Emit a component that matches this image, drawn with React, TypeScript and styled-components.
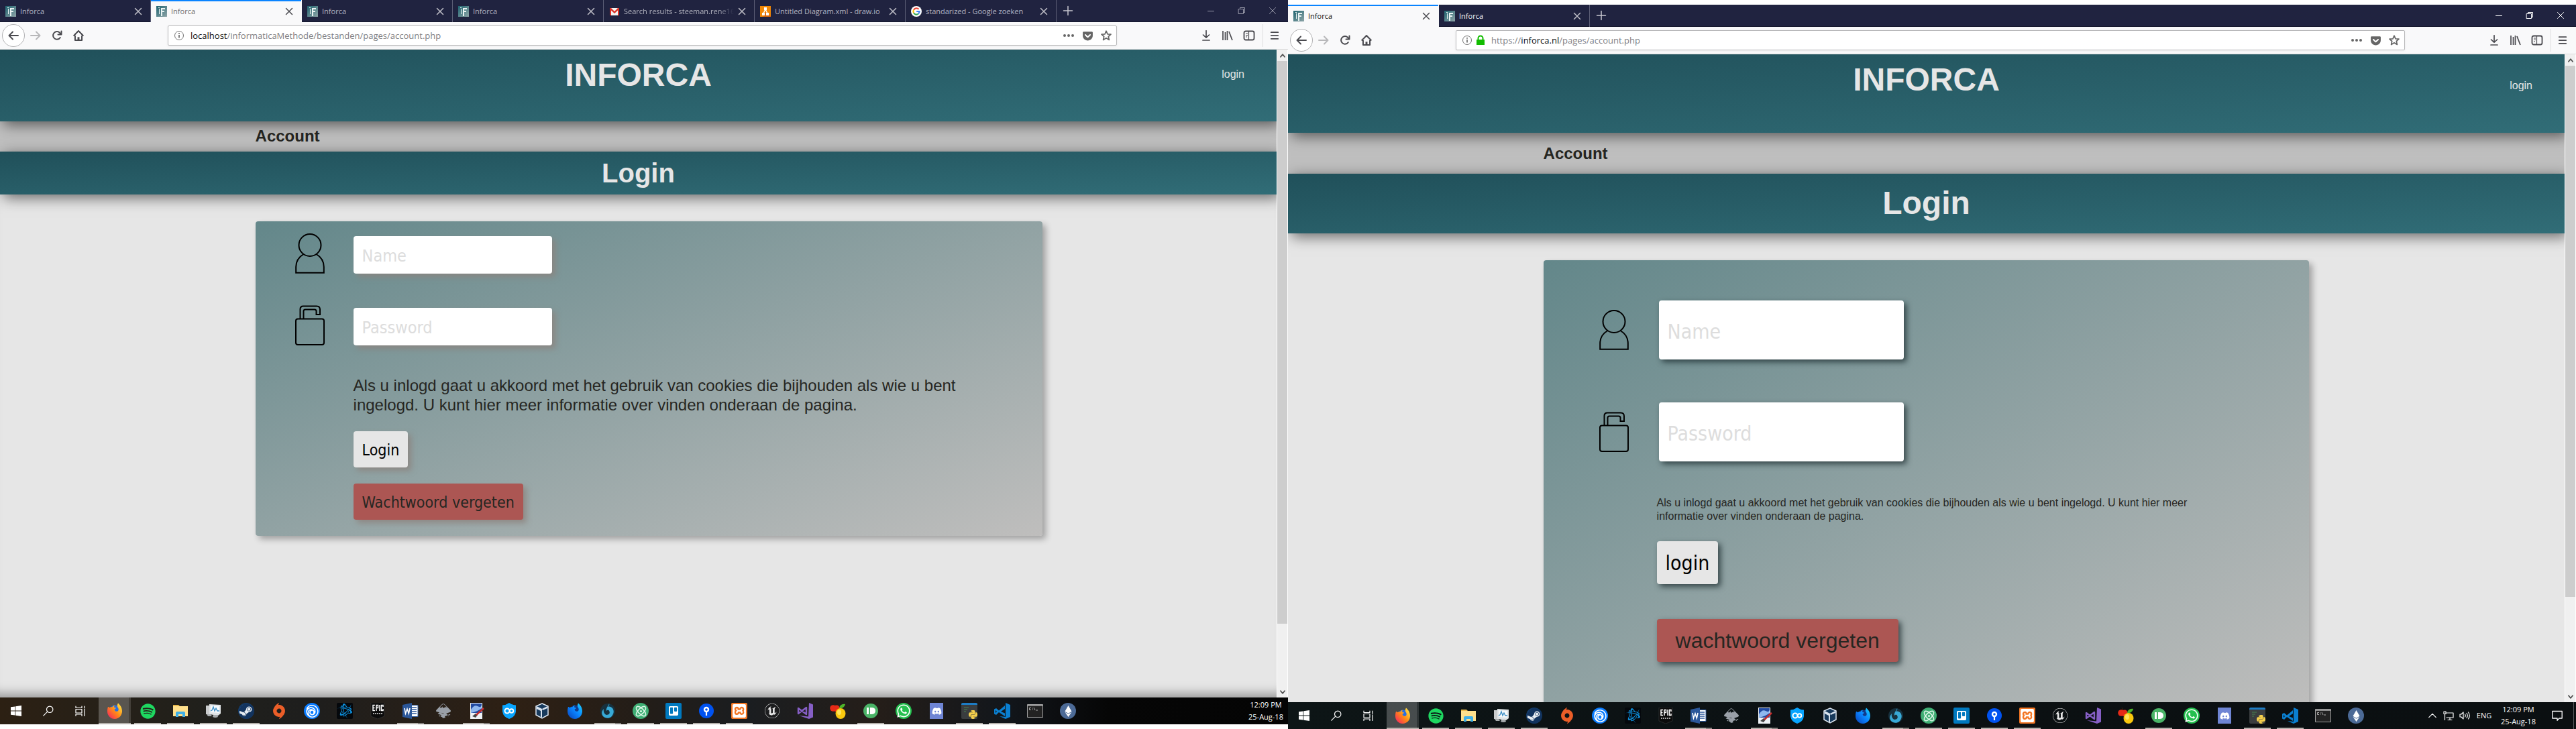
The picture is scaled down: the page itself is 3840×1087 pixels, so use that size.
import React from "react";
import styled, { createGlobalStyle, css } from "styled-components";
import { FaSpotify, FaSteam, FaWhatsapp, FaDiscord, FaTrello, FaPython, FaEthereum, FaBattleNet, FaGetPocket } from "react-icons/fa";
import { SiXampp, SiUnrealengine, SiInkscape, SiUbisoft, SiOrigin } from "react-icons/si";
import { Atom } from "lucide-react";

const UI_FONT = `"Open Sans", "Noto Sans", sans-serif`;
const PAGE_FONT = `"Liberation Sans", Arial, sans-serif`;
const FORM_FONT = `Tahoma, "DejaVu Sans Condensed", "DejaVu Sans", sans-serif`;

const GlobalStyle = createGlobalStyle`
  * { box-sizing: border-box; }
  body { margin: 0; background: #fff; font-family: ${PAGE_FONT}; }
  button, input { font: inherit; border: 0; margin: 0; padding: 0; }
  h1, h2, p { margin: 0; }
  svg { display: block; flex: none; }
`;

/* ---------- desktop ---------- */

const Desktops = styled.div`
  display: grid;
  grid-template-columns: 1fr 1fr;
  height: 100vh;
`;

const Screen = styled.div<{ $low?: boolean }>`
  display: flex;
  flex-direction: column;
  min-width: 0;
  min-height: 0;
  overflow: hidden;
  background: #fff;
  padding: ${(p) => (p.$low ? "7px 0 0" : "0 0 7px")};
`;

/* ---------- browser chrome ---------- */

const TabStrip = styled.div`
  display: flex;
  flex: none;
  height: 33px;
  background: #202340;
  border-bottom: 1px solid #14162c;
`;

const Tab = styled.div<{ $active?: boolean; $tone: string }>`
  display: flex;
  align-items: center;
  width: 225px;
  height: 33px;
  padding: 0 10px 0 8px;
  font: 11px/16px ${UI_FONT};
  color: ${(p) => p.$tone};
  border-right: 1px solid #5b5d75;
  ${(p) =>
    p.$active &&
    css`
      background: #f9f9fa;
      border-right-color: #f9f9fa;
      box-shadow: inset 0 2px #0a84ff;
    `}
`;

const TabTitle = styled.span<{ $fade: boolean }>`
  flex: 1;
  margin-left: 6px;
  overflow: hidden;
  white-space: nowrap;
  mask-image: ${(p) => (p.$fade ? "linear-gradient(to left, transparent 4px, #000 28px)" : "none")};
`;

const IconButton = styled.button<{ $w?: number; $tone?: string }>`
  display: flex;
  flex: none;
  align-items: center;
  justify-content: center;
  width: ${(p) => p.$w ?? 32}px;
  height: 100%;
  background: none;
  color: ${(p) => p.$tone ?? "#4a4a4f"};
`;

const WindowButtons = styled.div`
  display: flex;
  margin-left: auto;
`;

const NavBar = styled.div`
  display: flex;
  flex: none;
  align-items: center;
  height: 41px;
  padding: 0 3px;
  background: #f9f9fa;
  border-bottom: 1px solid #dcdcdc;
`;

const BackButton = styled(IconButton)`
  width: 34px;
  height: 34px;
  border: 1px solid #b1b1b3;
  border-radius: 50%;
  background: #fff;
`;

const AddressBar = styled.div`
  display: flex;
  flex: 1;
  align-items: center;
  height: 30px;
  margin: 0 117px 0 117px;
  padding: 0 1px 0 8px;
  border: 1px solid #b8b8ba;
  border-radius: 2px;
  background: #fff;
  box-shadow: 0 1px 4px rgba(0, 0, 0, 0.06);
`;

const Address = styled.div`
  flex: 1;
  padding-left: 9px;
  font: 13px/20px ${UI_FONT};
  color: #808084;
  b { font-weight: 400; color: #0c0c0d; }
`;

const SecureLock = styled.span`
  display: flex;
  margin-left: 5px;
`;

const MenuButton = styled(IconButton)`
  width: 35px;
  height: 34px;
  margin-left: 4px;
  border-left: 1px solid #dededf;
`;

/* ---------- web page ---------- */

const Viewport = styled.div`
  display: flex;
  flex: 1;
  min-height: 0;
`;

const Page = styled.div<{ $footerShade?: boolean }>`
  flex: 1;
  min-width: 0;
  overflow: hidden;
  background: #e6e6e6;
  box-shadow: ${(p) => (p.$footerShade ? "inset 0 -20px 16px -14px rgba(0,0,0,.35)" : "none")};
`;

const bar = css`
  position: relative;
  background: linear-gradient(to bottom right, #20505a, #316d77);
  box-shadow: 5px 5px 20px rgba(0, 0, 0, 0.55);
  color: #e6e6e6;
`;

const SiteHeader = styled.header<{ $tall?: boolean }>`
  ${bar}
  display: grid;
  grid-template-columns: 1fr auto 1fr;
  align-items: start;
  padding: 10px 48px ${(p) => (p.$tall ? 51 : 41)}px;
  h1 {
    grid-column: 2;
    font-size: 48px;
    line-height: 56px;
  }
`;

const LoginLink = styled.a<{ $tall?: boolean }>`
  justify-self: end;
  padding-top: ${(p) => (p.$tall ? 28 : 18)}px;
  font-size: 16px;
  line-height: 18px;
  color: #e6e6e6;
  text-decoration: none;
`;

const Crumb = styled.div<{ $tall?: boolean }>`
  padding: ${(p) => (p.$tall ? "17px 20% 16px" : "8px 20% 9px")};
  background: #bfbfbf;
  color: #262622;
  font-size: 24px;
  font-weight: 700;
  line-height: 28px;
`;

const Banner = styled.h2<{ $tall?: boolean }>`
  ${bar}
  padding: ${(p) => (p.$tall ? "16px 0 17px" : "9px 0")};
  font-size: ${(p) => (p.$tall ? 48 : 40)}px;
  line-height: ${(p) => (p.$tall ? 56 : 46)}px;
  text-align: center;
`;

const Card = styled.form<{ $tall?: boolean }>`
  display: flex;
  flex-direction: column;
  align-items: flex-start;
  box-sizing: content-box;
  width: 60%;
  margin: 40px 0 0 20%;
  padding: ${(p) => (p.$tall ? "60px 0 80px" : "18px 16px 24px")};
  border-radius: 4px;
  background: linear-gradient(to bottom right, #63878a, #bfbebd);
  box-shadow: 5px 5px 10px rgba(0, 0, 0, 0.3);
  color: #262622;
`;

const Field = styled.label<{ $tall?: boolean }>`
  display: grid;
  grid-template-columns: ${(p) => (p.$tall ? "89px 365px" : "87px 296px")};
  align-items: ${(p) => (p.$tall ? "center" : "end")};
  margin: ${(p) => (p.$tall ? "0 0 64px 83px" : "0 0 47px 43px")};
`;

const softShadow = "5px 5px 8px rgba(140, 130, 125, 0.8)";
const hardShadow = "4px 4px 8px rgba(20, 35, 38, 0.7)";

const TextInput = styled.input<{ $tall?: boolean }>`
  width: 100%;
  height: ${(p) => (p.$tall ? 88 : 56)}px;
  padding: ${(p) => (p.$tall ? "4px 13px 0" : "3px 13px 0")};
  border-radius: 4px;
  background: #fff;
  box-shadow: ${(p) => (p.$tall ? hardShadow : softShadow)};
  font-family: ${FORM_FONT};
  font-size: ${(p) => (p.$tall ? 30 : 25)}px;
  &::placeholder { color: #dddddd; opacity: 1; }
`;

const Notice = styled.p<{ $tall?: boolean }>`
  max-width: ${(p) => (p.$tall ? 830 : 960)}px;
  margin: ${(p) => (p.$tall ? "-12px 0 27px 169px" : "-2px 0 25px 130px")};
  font-size: ${(p) => (p.$tall ? 16 : 24)}px;
  line-height: ${(p) => (p.$tall ? 20 : 29)}px;
`;

const FormButton = styled.button<{ $tall?: boolean; $danger?: boolean }>`
  height: ${(p) => (p.$tall ? 64 : 54)}px;
  margin: ${(p) => (p.$tall ? "0 0 52px 169px" : "0 0 24px 130px")};
  padding: ${(p) => (p.$tall ? (p.$danger ? "0 28px" : "2px 13px 0") : "2px 13px 0")};
  border-radius: 4px;
  background: ${(p) => (p.$danger ? "#ac5653" : "#e6e6e6")};
  color: ${(p) => (p.$danger ? "#262622" : "#000")};
  box-shadow: ${(p) => (p.$tall ? hardShadow : softShadow)};
  font-family: ${(p) => (p.$tall && p.$danger ? PAGE_FONT : FORM_FONT)};
  font-size: ${(p) => (p.$tall ? (p.$danger ? 32 : 30) : 23)}px;
  line-height: 32px;
  &:last-child { margin-bottom: 0; }
`;

const ScrollBar = styled.div`
  display: flex;
  flex: none;
  flex-direction: column;
  width: 17px;
  background: #f0f0f0;
  border: solid #fff;
  border-width: 0 1px;
`;

const ScrollTrack = styled.div`
  flex: 1;
`;

const ScrollThumb = styled.div<{ $share: number }>`
  height: ${(p) => p.$share}%;
  background: #cdcdcd;
`;

const ScrollArrow = styled.button`
  display: flex;
  align-items: center;
  justify-content: center;
  height: 17px;
  background: none;
  color: #505050;
`;

/* ---------- task bar ---------- */

const TaskBar = styled.div<{ $dark?: boolean }>`
  display: flex;
  flex: none;
  height: 40px;
  color: #fff;
  background: ${(p) =>
    p.$dark
      ? "linear-gradient(to right, #0d1516, #0b1012 50%, #0b0f11)"
      : "linear-gradient(to right, #2c2013, #20201c 16%, #1e1e1d 24%, #2e2014 40%, #231d18 50%, #1a1d20 58%, #251e19 68%, #12161b 78%, #060606 86%, #040404)"};
`;

const SystemButton = styled.button`
  display: flex;
  align-items: center;
  justify-content: center;
  width: 48px;
  background: none;
  color: #fff;
`;

const Apps = styled.div`
  display: flex;
  gap: 1px;
  margin-left: 3px;
`;

const AppButton = styled.button<{ $state: string }>`
  position: relative;
  display: flex;
  align-items: center;
  justify-content: center;
  width: 48px;
  color: #fff;
  background: ${(p) =>
    p.$state === "active" ? "linear-gradient(to right, rgba(255,255,255,.24) 45px, rgba(255,255,255,.14) 45px)" : "none"};
  &::after {
    content: "";
    position: absolute;
    inset: auto ${(p) => (p.$state === "active" ? 0 : 4)}px 0;
    height: 2px;
    background: ${(p) =>
      p.$state === "idle" ? "none" : p.$state === "multi" ? "linear-gradient(to right, #b5b1ac 31px, #86827e 31px)" : "#b5b1ac"};
  }
`;

const Tray = styled.div`
  display: flex;
  align-items: center;
  margin-left: auto;
  padding-right: 3px;
  font: 11px/18px ${UI_FONT};
`;

const TrayItem = styled.button<{ $w: number }>`
  display: flex;
  align-items: center;
  justify-content: center;
  width: ${(p) => p.$w}px;
  height: 100%;
  background: none;
  color: #fff;
`;

const Clock = styled.time<{ $w: number }>`
  display: block;
  width: ${(p) => p.$w}px;
  text-align: center;
  white-space: nowrap;
`;

const Edge = styled.i`
  width: 1px;
  height: 100%;
  background: #5a5e60;
`;

/* ---------- drawings ---------- */

const Stroke = ({ d, s = 16, w = 2, fill = "none" }: { d: string; s?: number; w?: number; fill?: string }) => (
  <svg width={s} height={s} viewBox="0 0 16 16" fill={fill} stroke="currentColor" strokeWidth={w} strokeLinecap="round" strokeLinejoin="round">
    <path d={d} />
  </svg>
);

const Favicon = ({ kind }: { kind: string }) => {
  if (kind === "mail")
    return (
      <svg width="16" height="16" viewBox="0 0 16 16"><path fill="#f2f2f2" d="M1 3h14v11H1z" /><path fill="#d93025" d="M1 3h2l5 5 5-5h2v11h-2V6.500L8 11 3 6.500V14H1z" /></svg>
    );
  if (kind === "draw")
    return (
      <svg width="16" height="16" viewBox="0 0 16 16"><path fill="#f08705" d="M0 0h16v16H0z" /><path fill="#df6c0c" d="M9 8l7 7v1H5z" /><path stroke="#fff" strokeWidth="1.500" d="M8 5l-3 6M8 5l3 6" /><path fill="#fff" d="M6 2h4v4H6zM3 10h4v4H3zM9 10h4v4H9z" /></svg>
    );
  if (kind === "google")
    return (
      <svg width="16" height="16" viewBox="0 0 16 16"><circle cx="8" cy="8" r="8" fill="#fff" /><g fill="none" strokeWidth="2.200"><path stroke="#ea4335" d="M11.500 4.800A4.600 4.600 0 0 0 4 5.700" /><path stroke="#fbbc05" d="M4 5.700a4.600 4.600 0 0 0 0 4.600" /><path stroke="#34a853" d="M4 10.300a4.600 4.600 0 0 0 7 1.200" /><path stroke="#4285f4" d="M11 11.500A4.600 4.600 0 0 0 12.600 8H8.200" /></g></svg>
    );
  return (
    <svg width="16" height="16" viewBox="0 0 16 16">
      <defs><linearGradient id="fav" x2="1" y2="1"><stop stopColor="#1f6470" /><stop offset="1" stopColor="#8fa5a8" /></linearGradient></defs>
      <path fill="url(#fav)" d="M0 0h16v16H0z" />
      <path fill="#e9f2f2" d="M3 2h2v1H3zM4 4h1v8H4zM7 3h6v2H9v2h3v2H9v6H7z" />
    </svg>
  );
};

const Cross = ({ w = 1.500 }: { w?: number }) => <Stroke s={16} w={w} d="M3.500 3.500l9 9M12.500 3.500l-9 9" />;

const InfoIcon = () => (
  <svg width="16" height="16" viewBox="0 0 16 16" fill="none" stroke="#737373"><circle cx="8" cy="8" r="6.500" /><path strokeWidth="1.800" d="M8 7v4.500M8 4v1.800" /></svg>
);

const HomeIcon = () => (
  <svg width="18" height="18" viewBox="0 0 16 16" fill="none" stroke="currentColor" strokeWidth="1.800" strokeLinejoin="round"><path d="M1.500 8.500L8 1.800l6.500 6.700M3.500 8v6.200h9V8" /><path d="M8 14v-4" strokeWidth="2.600" /></svg>
);

const LibraryIcon = () => (
  <svg width="18" height="16" viewBox="0 0 18 16" fill="none" stroke="currentColor" strokeWidth="1.700"><path d="M2 1v14M5.500 3v12M8.500 1v14M11 2l5 13" /></svg>
);

const SidebarIcon = () => (
  <svg width="18" height="16" viewBox="0 0 18 16" fill="none" stroke="currentColor" strokeWidth="1.800"><rect x="1.500" y="1.500" width="15" height="13" rx="2.500" /><path strokeWidth="1.200" d="M8.500 2v12M4 5h3M4 7.500h3M4 10h2" /></svg>
);

const PersonIcon = () => (
  <svg width="44" height="60" viewBox="0 0 44 60" fill="none" stroke="#000" strokeWidth="2"><circle cx="22" cy="17.500" r="16.500" /><path d="M12.500 31C4 36 1.200 43 1.200 50v8.800h41.600V50C42.800 43 40 36 31.500 31" /></svg>
);

const LockIcon = () => (
  <svg width="44" height="60" viewBox="0 0 44 60" fill="none" stroke="#000" strokeWidth="2"><rect x="1" y="20.500" width="42" height="38.500" rx="3" /><path d="M7.500 20V6q0-4.500 4.500-4.500h20q5 0 5 5V14h-5.500V9q0-2.500-2.500-2.500H15q-2.500 0-2.500 2.500v11" /></svg>
);

const Fox = ({ blue }: { blue?: boolean }) => (
  <svg width="24" height="24" viewBox="0 0 24 24">
    <defs>
      <linearGradient id={blue ? "foxb" : "foxo"} x1="1" y1="0" x2="0" y2="1">
        <stop stopColor={blue ? "#19d4ff" : "#fff44f"} /><stop offset=".5" stopColor={blue ? "#0a84ff" : "#ff8a16"} /><stop offset="1" stopColor={blue ? "#0a3fb5" : "#f5156c"} />
      </linearGradient>
    </defs>
    <circle cx="12.500" cy="12" r="8.500" fill={blue ? "#123a8c" : "#2b6fe0"} />
    <path fill={`url(#${blue ? "foxb" : "foxo"})`} d="M2 6c1 0 1.500.5 2 1.200C5.500 6 7 6 8.500 6.300 9.300 5 10.500 4 12 3.800c-1 1-1 2.200-.5 3.200l2.500.5c0 1-2.500 2-2.500 2.500.5 2 2 3 4 2.800 2.500-.5 3-3.500 1-6-1-1.500-1-3.800.5-6.300C19 2.500 23 6 23 12.500 23 19 18 24 12 24S1 19 1 13c0-3 .2-5 1-7z" />
  </svg>
);

const Round = ({ color, children, r = 11 }: { color: string; children?: React.ReactNode; r?: number }) => (
  <svg width="24" height="24" viewBox="0 0 24 24"><circle cx="12" cy="12" r={r} fill={color} />{children}</svg>
);

const Explorer = () => (
  <svg width="24" height="24" viewBox="0 0 24 24"><path fill="#e8b84a" d="M1 3h8l2 2v4H1z" /><path fill="#ffe08c" d="M1 5h22v15H1z" /><path fill="#3fb0e8" d="M5 21v-6q0-2 2-2h10q2 0 2 2v6h-4v-4H9v4z" /></svg>
);
const Monitor = () => (
  <svg width="24" height="24" viewBox="0 0 24 24"><path fill="#c9cccd" d="M1 4h6v13H1z" /><path fill="#dfe3e5" d="M6 2l17 1v13l-4 3-13-2z" /><path fill="#f6fafc" d="M8 4l13 1v10L8 14z" /><path fill="none" stroke="#3b8dc4" strokeWidth="1.300" d="M8 12l2-1 2-5 2 6 2-4 2 4h3" /><path fill="#a7acae" d="M12 18h6l1 3q-4 2-8 0zM2 17h6l2 3H4z" /></svg>
);
const Epic = () => (
  <svg width="24" height="24" viewBox="0 0 24 24"><path fill="#0b0b0b" stroke="#444" strokeWidth=".5" d="M2 0h20v20l-10 4-10-4z" /><path fill="none" stroke="#fff" strokeWidth="1.500" d="M8 3.500H5v8h3M5 7.500h2.500M10 12V3.500h2.500v4H10M15 3v9M20 6V3.500h-2.500v8H20V9" /><path stroke="#ddd" strokeWidth="1.500" strokeDasharray="2 1" d="M5 16h14" /></svg>
);
const Word = () => (
  <svg width="24" height="24" viewBox="0 0 24 24"><path fill="#fff" stroke="#2b579a" d="M12 3.500h11v17H12z" /><path stroke="#2b579a" strokeWidth="1.300" d="M13 7h8M13 10h8M13 13h8M13 16h8" /><path fill="#2b579a" d="M0 3l14-3v24L0 21z" /><path fill="none" stroke="#fff" strokeWidth="1.600" d="M3 8l1.500 8L7 9l2.300 7L11 8" /></svg>
);
const PaintNet = () => (
  <svg width="24" height="24" viewBox="0 0 24 24"><path fill="#eef2f6" d="M3 0h18v24H3z" /><path fill="#214aa0" d="M4 1h16v14H4z" /><path fill="#8fb8ee" d="M4 10q5-8 10-5T20 3v5q-6 5-16 7z" /><path fill="#444" d="M6 20l5-4 3 2-3 4z" /><path stroke="#c42b2b" strokeWidth="2.500" d="M12 18L23 8" /></svg>
);
const Shield = () => (
  <svg width="24" height="24" viewBox="0 0 24 24"><path fill="#08a5ff" d="M12 0q5 3.500 10 3.500V13q-1 8-10 11Q3 21 2 13V3.500Q7 3.500 12 0z" /><g fill="none" stroke="#fff" strokeWidth="2"><circle cx="9" cy="12" r="3.500" /><circle cx="15.500" cy="12" r="2.800" /></g></svg>
);
const Cube = () => (
  <svg width="24" height="24" viewBox="0 0 24 24"><path fill="#183a5c" stroke="#dfe8f2" strokeWidth="1.500" d="M12 1l9 4v13l-9 5-9-5V5z" /><path fill="#d9e3ee" d="M4 5l8 4v13l-2-1v-9L4 9zM20 5l-8 4 1 2 7-3z" /></svg>
);
const Swirl = () => (
  <Round color="#17303d"><path fill="#38a9d6" d="M14 1c1 3-1 4-3 5 4-1 6 0 8 2 3 4 2 9-2 13-4 3-9 2-12-1-3-4-2-8 1-11-1 4 1 8 4 9 4 0 6-3 4-6-1-2-3-1-4 0-1-5 3-7 4-11z" /></Round>
);
const SourceTree = () => (
  <Round color="#0052f0"><circle cx="12" cy="10" r="3" fill="none" stroke="#fff" strokeWidth="2.400" /><path stroke="#fff" strokeWidth="2.200" d="M12 14v5" /></Round>
);
const Tile = styled.span<{ $bg: string; $round?: boolean }>`
  display: flex;
  align-items: center;
  justify-content: center;
  width: 24px;
  height: 24px;
  border-radius: ${(p) => (p.$round ? "50%" : "2px")};
  background: ${(p) => p.$bg};
`;
const VsCode = ({ tone }: { tone: string }) => (
  <svg width="24" height="24" viewBox="0 0 24 24" fill={tone}><path d="M17 0l7 3v18l-7 3-9-4 9 1z" /><path fillRule="evenodd" d="M16 4L7 11.500 3 8 0 9.500v7L3 18l4-4 9 6v-4.500L10 13l6-4zM2 11l2 2-2 2z" /></svg>
);
const VStudio = () => (
  <svg width="24" height="24" viewBox="0 0 24 24"><path fill="#865fc5" d="M18 0l6 2.500v19L18 24 3 19l14 1.500z" /><path fill="none" stroke="#865fc5" strokeWidth="2.400" strokeLinejoin="round" d="M2 8v8l12-9v10z" /></svg>
);
const Fruit = () => (
  <svg width="24" height="24" viewBox="0 0 24 24"><path stroke="#302010" strokeWidth="1.200" d="M6 0l2 5" /><circle cx="5" cy="8" r="4.800" fill="#e62a17" /><circle cx="10" cy="8.500" r="5" fill="#e62a17" /><path fill="#4fb52a" d="M14 9c0-5 4-8 9-7-1 4-4 6-9 7z" /><ellipse cx="16" cy="16" rx="7.500" ry="8" fill="#f9c80e" /><ellipse cx="14" cy="14" rx="3" ry="4" fill="#ffe45c" /></svg>
);
const PushBullet = () => (
  <Round color="#4ab367"><path fill="#fff" d="M6 7h3v10H6zM11 7h2q6 0 6 5t-6 5h-2z" /></Round>
);
const PyEditor = () => (
  <Tile $bg="linear-gradient(#1d7cc4 3px, #3a3d3f 3px)"><svg width="24" height="24" viewBox="0 0 24 24"><path stroke="#468350" d="M4 7h7M4 10h5M4 13h3" /></svg></Tile>
);
const PyBadge = styled.span`
  position: relative;
  display: flex;
  > svg:last-child { position: absolute; right: -1px; bottom: -1px; }
`;
const Console = () => (
  <svg width="24" height="24" viewBox="0 0 24 24"><path fill="#222" stroke="#a0a0a0" d="M.5 2.500h23v19H.5z" /><path fill="#8c8c8c" d="M1 3h22v2H1z" /><path stroke="#aaa" fill="none" d="M6 7.500H3.500v3H6M8 8h1M8 10h1M10 7l2 4M13 11h3" /></svg>
);

const apps: { name: string; state: string; icon: React.ReactNode }[] = [
  { name: "Firefox", state: "active", icon: <Fox /> },
  { name: "Spotify", state: "open", icon: <FaSpotify size={23} color="#1ed760" /> },
  { name: "Explorer", state: "open", icon: <Explorer /> },
  { name: "Monitor", state: "open", icon: <Monitor /> },
  { name: "Steam", state: "open", icon: <Tile $round $bg="radial-gradient(#e8edf2 60%, #123a68 62%)"><FaSteam size={23} color="#12335e" /></Tile> },
  { name: "Origin", state: "idle", icon: <SiOrigin size={24} color="#eb5e28" /> },
  { name: "Uplay", state: "idle", icon: <Tile $round $bg="#0a7cff"><SiUbisoft size={19} color="#fff" /></Tile> },
  { name: "Battle.net", state: "idle", icon: <Tile $bg="#05080c"><FaBattleNet size={22} color="#0d8fdc" /></Tile> },
  { name: "Epic Games", state: "idle", icon: <Epic /> },
  { name: "Word", state: "multi", icon: <Word /> },
  { name: "Inkscape", state: "idle", icon: <SiInkscape size={22} color="#9aa0a8" /> },
  { name: "Paint.NET", state: "multi", icon: <PaintNet /> },
  { name: "Shield", state: "idle", icon: <Shield /> },
  { name: "VirtualBox", state: "idle", icon: <Cube /> },
  { name: "Firefox Developer", state: "idle", icon: <Fox blue /> },
  { name: "GitKraken", state: "multi", icon: <Swirl /> },
  { name: "Atom", state: "open", icon: <Tile $round $bg="#3fae74"><Atom size={19} color="#d9f5e4" /></Tile> },
  { name: "Trello", state: "open", icon: <Tile $bg="#0079bf"><FaTrello size={16} color="#fff" /></Tile> },
  { name: "Sourcetree", state: "open", icon: <SourceTree /> },
  { name: "XAMPP", state: "open", icon: <Tile $bg="#f37623"><SiXampp size={20} color="#fff" /></Tile> },
  { name: "Unreal", state: "idle", icon: <SiUnrealengine size={22} color="#e8e8e8" /> },
  { name: "Visual Studio", state: "idle", icon: <VStudio /> },
  { name: "Fruit", state: "idle", icon: <Fruit /> },
  { name: "Pushbullet", state: "open", icon: <PushBullet /> },
  { name: "WhatsApp", state: "idle", icon: <Tile $round $bg="#25c04f"><FaWhatsapp size={22} color="#fff" /></Tile> },
  { name: "Discord", state: "idle", icon: <Tile $bg="linear-gradient(to right, transparent 2px, #6f85d4 2px 22px, transparent 22px)"><FaDiscord size={15} color="#fff" /></Tile> },
  { name: "Python editor", state: "open", icon: <PyBadge><PyEditor /><FaPython size={15} color="#f5cf4c" /></PyBadge> },
  { name: "VS Code", state: "open", icon: <VsCode tone="#0a7fd0" /> },
  { name: "Console", state: "idle", icon: <Console /> },
  { name: "Ethereum", state: "idle", icon: <Tile $round $bg="#4c6a96"><FaEthereum size={17} color="#fff" /></Tile> },
];

/* ---------- assembled parts ---------- */

type TabInfo = { title: string; icon: string; active?: boolean; tone: string };

function Browser({ tabs, secure, address, controls }: { tabs: TabInfo[]; secure?: boolean; address: React.ReactNode; controls: string }) {
  return (
    <>
      <TabStrip>
        {tabs.map((t, i) => (
          <Tab key={i} $active={t.active} $tone={t.tone}>
            <Favicon kind={t.icon} />
            <TabTitle $fade={t.icon === "mail"}>{t.title}</TabTitle>
            <IconButton $w={16} $tone={t.active ? "#4a4a4f" : "#c0c0c8"} aria-label="Close tab"><Cross /></IconButton>
          </Tab>
        ))}
        <IconButton $w={34} $tone="#c8c8d0" aria-label="New tab"><Stroke w={1.500} d="M8 1.500v13M1.500 8h13" /></IconButton>
        <WindowButtons>
          <IconButton $w={46} $tone={controls} aria-label="Minimize"><Stroke w={1} s={16} d="M3.500 8.500h9" /></IconButton>
          <IconButton $w={46} $tone={controls} aria-label="Restore"><Stroke w={1} d="M3.500 5.500h7v7h-7zM5.500 5.500v-2h7v7h-2" /></IconButton>
          <IconButton $w={46} $tone={controls} aria-label="Close"><Stroke w={1} d="M3.500 3.500l9 9M12.500 3.500l-9 9" /></IconButton>
        </WindowButtons>
      </TabStrip>
      <NavBar>
        <BackButton aria-label="Back"><Stroke d="M15 8H1.500M7 2.500L1.500 8 7 13.500" /></BackButton>
        <IconButton $tone="#b8b8ba" aria-label="Forward"><Stroke d="M1 8h13.500M9 2.500L14.500 8 9 13.500" /></IconButton>
        <IconButton aria-label="Reload"><Stroke d="M12.800 11A5.800 5.800 0 1 1 12 3.800l1.500 1.700M14.500 1.500v5h-5" /></IconButton>
        <IconButton aria-label="Home"><HomeIcon /></IconButton>
        <AddressBar>
          <InfoIcon />
          {secure && (
            <SecureLock><svg width="14" height="16" viewBox="0 0 14 16"><path fill="#12bc00" d="M1 7h12v8H1z" /><path fill="none" stroke="#12bc00" strokeWidth="2" d="M3.500 8V5a3.500 3.500 0 0 1 7 0v3" /></svg></SecureLock>
          )}
          <Address>{address}</Address>
          <IconButton $w={28} $tone="#666" aria-label="Page actions"><svg width="16" height="4" viewBox="0 0 16 4" fill="currentColor"><circle cx="2" cy="2" r="2" /><circle cx="8" cy="2" r="2" /><circle cx="14" cy="2" r="2" /></svg></IconButton>
          <IconButton $w={28} $tone="#666" aria-label="Pocket"><FaGetPocket size={17} /></IconButton>
          <IconButton $w={28} $tone="#666" aria-label="Bookmark"><Stroke w={1.700} d="M8 1.200l2 4.600 5 .4-3.700 3.300 1.100 5L8 11.800l-4.400 2.700 1.100-5L1 6.200l5-.4z" /></IconButton>
        </AddressBar>
        <IconButton aria-label="Downloads"><Stroke d="M8 .8v10M3.500 7L8 11.200 12.500 7M3 15h10" w={1.700} /></IconButton>
        <IconButton aria-label="Library"><LibraryIcon /></IconButton>
        <IconButton aria-label="Sidebars"><SidebarIcon /></IconButton>
        <MenuButton aria-label="Menu"><Stroke s={14} d="M2 2.500h12M2 8h12M2 13.500h12" /></MenuButton>
      </NavBar>
    </>
  );
}

function LoginPage({ tall, loginText, forgotText, thumb }: { tall?: boolean; loginText: string; forgotText: string; thumb: number }) {
  return (
    <Viewport>
      <Page $footerShade={!tall}>
        <SiteHeader $tall={tall}>
          <h1>INFORCA</h1>
          <LoginLink $tall={tall} href="#login">login</LoginLink>
        </SiteHeader>
        <Crumb $tall={tall}>Account</Crumb>
        <Banner $tall={tall}>Login</Banner>
        <Card $tall={tall} id={tall ? undefined : "login"} onSubmit={(e) => e.preventDefault()}>
          <Field $tall={tall}><PersonIcon /><TextInput $tall={tall} type="text" placeholder="Name" aria-label="Name" /></Field>
          <Field $tall={tall}><LockIcon /><TextInput $tall={tall} type="password" placeholder="Password" aria-label="Password" /></Field>
          <Notice $tall={tall}>
            Als u inlogd gaat u akkoord met het gebruik van cookies die bijhouden als wie u bent ingelogd. U kunt hier meer informatie over vinden onderaan de pagina.
          </Notice>
          <FormButton $tall={tall} type="submit">{loginText}</FormButton>
          <FormButton $tall={tall} $danger type="button">{forgotText}</FormButton>
        </Card>
      </Page>
      <ScrollBar>
        <ScrollArrow aria-label="Scroll up"><Stroke s={10} w={2.500} d="M3 11l5-6 5 6" /></ScrollArrow>
        <ScrollTrack><ScrollThumb $share={thumb} /></ScrollTrack>
        <ScrollArrow aria-label="Scroll down"><Stroke s={10} w={2.500} d="M3 5l5 6 5-6" /></ScrollArrow>
      </ScrollBar>
    </Viewport>
  );
}

function Tasks({ dark }: { dark?: boolean }) {
  return (
    <TaskBar $dark={dark}>
      <SystemButton aria-label="Start"><svg width="16" height="16" viewBox="0 0 16 16" fill="#fff"><path d="M0 2.300L6.500 1.400v6.200H0zM7.300 1.300L16 0v7.600H7.300zM0 8.400h6.500v6.200L0 13.700zM7.300 8.400H16V16l-8.700-1.300z" /></svg></SystemButton>
      <SystemButton aria-label="Search"><Stroke w={1.200} d="M.8 15.200l5.400-5.600M5.500 5.800a4.700 4.700 0 1 0 9.400 0 4.700 4.700 0 1 0-9.400 0" /></SystemButton>
      <SystemButton aria-label="Task view"><Stroke w={1.200} d="M1 1v2.500h9V1M1 5.500h9v5.500H1zM1 15.500V13h9v2.500M14 1v3M14 7v8.500M13.500 5.500h1" /></SystemButton>
      <Apps>
        {apps.map((a) => (
          <AppButton key={a.name} $state={a.state} aria-label={a.name}>{a.icon}</AppButton>
        ))}
      </Apps>
      <Tray>
        {dark && (
          <>
            <TrayItem $w={24} aria-label="Hidden icons"><Stroke s={14} w={1.400} d="M2 11l6-6 6 6" /></TrayItem>
            <TrayItem $w={24} aria-label="Network"><Stroke w={1.200} d="M5 4h10v7H5M10 11v3.500M7 14.500h6M1 2h3v3.500H1zM2.500 5.500v9" /></TrayItem>
            <TrayItem $w={24} aria-label="Volume"><Stroke w={1.200} d="M1 6h2l3-3v10l-3-3H1zM8.500 6q1.500 2 0 4M11 4.500q2.500 3.500 0 7M13.500 3q3.500 5 0 10" /></TrayItem>
            <TrayItem $w={34}>ENG</TrayItem>
          </>
        )}
        <Clock $w={dark ? 68 : 60}>12:09 PM<br />25-Aug-18</Clock>
        {dark && (
          <>
            <TrayItem $w={48} aria-label="Notifications"><Stroke w={1.300} d="M.8 1.500h14.400v10.500H11L8 15.200 8 12H.8z" /></TrayItem>
            <Edge />
          </>
        )}
      </Tray>
    </TaskBar>
  );
}

const dim = "#b4b5c0";

export default function App() {
  return (
    <>
      <GlobalStyle />
      <Desktops>
        <Screen>
          <Browser
            controls="#9a9bab"
            tabs={[
              { title: "Inforca", icon: "site", tone: dim },
              { title: "Inforca", icon: "site", tone: "#6d6d70", active: true },
              { title: "Inforca", icon: "site", tone: dim },
              { title: "Inforca", icon: "site", tone: dim },
              { title: "Search results - steeman.rene16", icon: "mail", tone: dim },
              { title: "Untitled Diagram.xml - draw.io", icon: "draw", tone: dim },
              { title: "standarized - Google zoeken", icon: "google", tone: dim },
            ]}
            address={<><b>localhost</b>/informaticaMethode/bestanden/pages/account.php</>}
          />
          <LoginPage loginText="Login" forgotText="Wachtwoord vergeten" thumb={90} />
          <Tasks />
        </Screen>
        <Screen $low>
          <Browser
            secure
            controls="#ffffff"
            tabs={[
              { title: "Inforca", icon: "site", tone: "#0c0c0d", active: true },
              { title: "Inforca", icon: "site", tone: "#f9f9fa" },
            ]}
            address={<>https://<b>inforca.nl</b>/pages/account.php</>}
          />
          <LoginPage tall loginText="login" forgotText="wachtwoord vergeten" thumb={85} />
          <Tasks dark />
        </Screen>
      </Desktops>
    </>
  );
}
